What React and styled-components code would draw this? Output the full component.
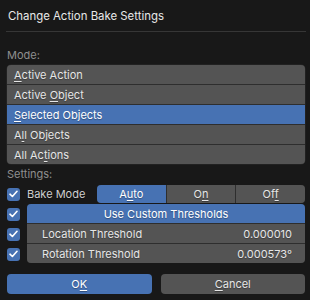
import React, { useState } from "react";
import styled, { createGlobalStyle } from "styled-components";

const GlobalStyle = createGlobalStyle`
  html, body {
    margin: 0;
    background: #181818;
  }
  body {
    font-family: Inter, "Noto Sans", "DejaVu Sans", sans-serif;
    font-size: 11px;
    color: #e6e6e6;
  }
`;

const Dialog = styled.div`
  width: 310px;
  height: 300px;
  box-sizing: border-box;
  padding: 0 5px 0 7px;
  background: #181818;
`;

const Title = styled.div`
  height: 31px;
  display: flex;
  align-items: center;
  padding-left: 1px;
  font-size: 11.4px;
  color: #e8e8e8;
`;

const Divider = styled.div`
  height: 1px;
  margin: 0 -1px;
  background: #363636;
`;

const SectionLabel = styled.div`
  height: 20px;
  display: flex;
  align-items: center;
  color: #8f8f8f;
  margin-top: ${({ $top }) => $top || 0}px;
`;

const List = styled.div`
  display: flex;
  flex-direction: column;
  border-radius: 4px;
  overflow: hidden;
  background: #2e2e2e;
  gap: 1px;
  box-shadow: 0 0 0 0.5px #2a2a2a;
`;

const ListItem = styled.div`
  height: 19px;
  display: flex;
  align-items: center;
  padding-left: 7px;
  background: ${({ $active }) => ($active ? "#4772b3" : "#545454")};
  color: ${({ $active }) => ($active ? "#ffffff" : "#e6e6e6")};
  text-shadow: 0 1px 1px rgba(0, 0, 0, 0.3);
  cursor: pointer;
`;

const Key = styled.span`
  text-decoration: underline;
  text-underline-offset: 2px;
`;

const SettingsGrid = styled.div`
  display: grid;
  grid-template-columns: 20px 1fr;
`;

const CheckCell = styled.div`
  height: 20px;
  display: flex;
  align-items: center;
`;

const Box = styled.div`
  width: 13px;
  height: 13px;
  border-radius: 3px;
  background: #4772b3;
  display: flex;
  align-items: center;
  justify-content: center;
  cursor: pointer;
`;

const BakeRow = styled.div`
  height: 20px;
  display: grid;
  grid-template-columns: 70px 1fr;
  align-items: center;
`;

const RowLabel = styled.div`
  color: #cfcfcf;
  text-shadow: 0 1px 1px rgba(0, 0, 0, 0.4);
`;

const Segmented = styled.div`
  height: 18px;
  display: grid;
  grid-template-columns: repeat(3, 1fr);
  gap: 1px;
  background: #2e2e2e;
  border-radius: 4px;
  overflow: hidden;
  margin-bottom: 1px;
`;

const Segment = styled.div`
  display: flex;
  align-items: center;
  justify-content: center;
  background: ${({ $active }) => ($active ? "#4772b3" : "#545454")};
  color: ${({ $active }) => ($active ? "#ffffff" : "#e6e6e6")};
  text-shadow: 0 1px 1px rgba(0, 0, 0, 0.3);
  cursor: pointer;
`;

const ThresholdGroup = styled.div`
  grid-column: 2;
  grid-row: 2 / span 3;
  display: flex;
  flex-direction: column;
  gap: 1px;
  background: #2e2e2e;
  border-radius: 4px;
  overflow: hidden;
  height: 59px;
`;

const ToggleBar = styled.div`
  height: 19px;
  display: flex;
  align-items: center;
  justify-content: center;
  background: #4772b3;
  color: #ffffff;
  text-shadow: 0 1px 1px rgba(0, 0, 0, 0.3);
`;

const NumberField = styled.div`
  height: 19px;
  display: flex;
  align-items: center;
  justify-content: space-between;
  padding: 0 13px 0 15px;
  background: #545454;
  color: #e6e6e6;
  text-shadow: 0 1px 1px rgba(0, 0, 0, 0.3);
`;

const Footer = styled.div`
  display: grid;
  grid-template-columns: 1fr 1fr;
  gap: 9px;
  margin-top: 10px;
`;

const Button = styled.div`
  height: 20px;
  border-radius: 4px;
  display: flex;
  align-items: center;
  justify-content: center;
  background: ${({ $primary }) => ($primary ? "#4772b3" : "#545454")};
  color: ${({ $primary }) => ($primary ? "#ffffff" : "#e6e6e6")};
  text-shadow: 0 1px 1px rgba(0, 0, 0, 0.3);
  cursor: pointer;
`;

const Check = () => (
  <svg width="9" height="8" viewBox="0 0 9 8">
    <path d="M1 4.2 L3.4 6.5 L8 1.3" fill="none" stroke="#ffffff" strokeWidth="1.6" strokeLinecap="round" strokeLinejoin="round" />
  </svg>
);

const modes = [
  { key: "action", label: <span><Key>A</Key>ctive Action</span> },
  { key: "object", label: <span>Active <Key>O</Key>bject</span> },
  { key: "selected", label: <span><Key>S</Key>elected Objects</span> },
  { key: "all", label: <span>A<Key>l</Key>l Objects</span> },
  { key: "actions", label: <span>All Ac<Key>t</Key>ions</span> },
];

const bakeModes = [
  { key: "auto", label: <span>A<Key>u</Key>to</span> },
  { key: "on", label: <span>O<Key>n</Key></span> },
  { key: "off", label: <span>Of<Key>f</Key></span> },
];

const App = () => {
  const [mode, setMode] = useState("selected");
  const [bake, setBake] = useState("auto");

  return (
    <>
      <GlobalStyle />
      <Dialog>
        <Title>Change Action Bake Settings</Title>
        <Divider />
        <SectionLabel $top={13}>Mode:</SectionLabel>
        <List>
          {modes.map((m) => (
            <ListItem key={m.key} $active={mode === m.key} onClick={() => setMode(m.key)}>
              {m.label}
            </ListItem>
          ))}
        </List>
        <SectionLabel>Settings:</SectionLabel>
        <SettingsGrid>
          <CheckCell><Box><Check /></Box></CheckCell>
          <BakeRow>
            <RowLabel>Bake Mode</RowLabel>
            <Segmented>
              {bakeModes.map((b) => (
                <Segment key={b.key} $active={bake === b.key} onClick={() => setBake(b.key)}>
                  {b.label}
                </Segment>
              ))}
            </Segmented>
          </BakeRow>
          <CheckCell><Box><Check /></Box></CheckCell>
          <ThresholdGroup>
            <ToggleBar>Use Custom Thresholds</ToggleBar>
            <NumberField>
              <span>Location Threshold</span>
              <span>0.000010</span>
            </NumberField>
            <NumberField>
              <span>Rotation Threshold</span>
              <span>0.000573°</span>
            </NumberField>
          </ThresholdGroup>
          <CheckCell><Box><Check /></Box></CheckCell>
          <CheckCell><Box><Check /></Box></CheckCell>
        </SettingsGrid>
        <Footer>
          <Button $primary>O<Key>K</Key></Button>
          <Button><Key>C</Key>ancel</Button>
        </Footer>
      </Dialog>
    </>
  );
};

export default App;
